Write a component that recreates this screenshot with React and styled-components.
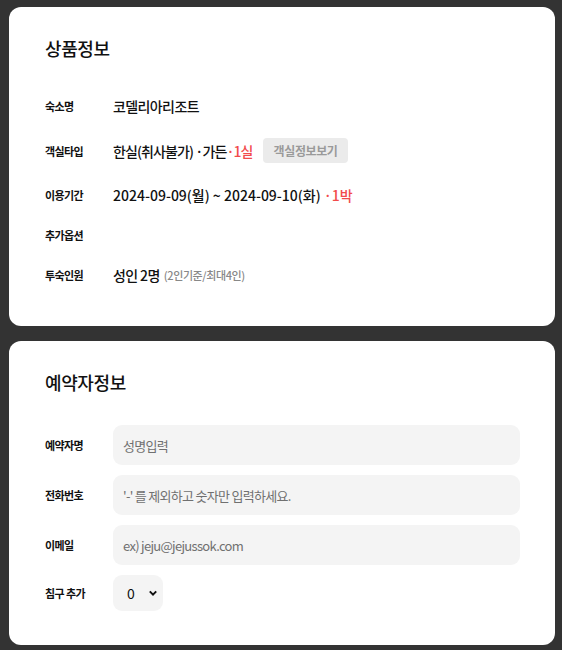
import React from "react";
import styled, { createGlobalStyle } from "styled-components";

const GlobalStyle = createGlobalStyle`
  html, body {
    margin: 0;
    padding: 0;
    background: #333333;
  }
  body {
    font-family: "Noto Sans CJK KR", "Noto Sans", sans-serif;
    color: #111;
  }
`;

const Page = styled.div`
  display: flex;
  flex-direction: column;
  gap: 15px;
  padding: 7px 7px 0 9px;
`;

const Card = styled.section`
  background: #fff;
  border-radius: 12px;
  padding: 28px 35px ${(p) => p.$bottom || 40}px 36px;
`;

const Title = styled.h2`
  margin: 0;
  font-size: 18px;
  line-height: 26px;
  font-weight: 500;
  letter-spacing: -0.4px;
`;

const InfoList = styled.div`
  display: flex;
  flex-direction: column;
  gap: 21px;
  margin-top: 34px;
`;

const Row = styled.div`
  display: flex;
  align-items: center;
  min-height: ${(p) => p.$h || 22}px;
`;

const Label = styled.div`
  width: 68px;
  flex-shrink: 0;
  font-size: 11px;
  font-weight: 700;
  letter-spacing: -0.6px;
  color: #111;
`;

const Value = styled.div`
  font-size: 14px;
  font-weight: 500;
  letter-spacing: ${(p) => p.$spacing || "-0.6px"};
  color: #111;
  display: flex;
  align-items: center;
  white-space: nowrap;
`;

const Accent = styled.span`
  color: #f24b4b;
  margin-left: ${(p) => p.$gap || 0}px;
`;

const Sub = styled.span`
  font-size: 11px;
  color: #888;
  margin-left: 4px;
  letter-spacing: -0.4px;
`;

const SmallButton = styled.button`
  margin-left: 10px;
  height: 25px;
  padding: 0 11px;
  border: none;
  border-radius: 4px;
  background: #ebebeb;
  color: #9a9a9a;
  font-family: inherit;
  font-size: 12px;
  font-weight: 700;
  letter-spacing: -0.4px;
`;

const FormList = styled.div`
  display: flex;
  flex-direction: column;
  gap: 10px;
  margin-top: 30px;
`;

const Input = styled.input`
  flex: 1;
  height: 40px;
  box-sizing: border-box;
  border: none;
  border-radius: 9px;
  background: #f4f4f4;
  padding: 0 10px;
  font-family: inherit;
  font-size: 13px;
  letter-spacing: -0.7px;
  outline: none;
  &::placeholder {
    color: #707070;
  }
`;

const SelectBox = styled.div`
  position: relative;
  width: 50px;
  height: 36px;
  border-radius: 9px;
  background: #f4f4f4;
  display: flex;
  align-items: center;
  padding-left: 14px;
  box-sizing: border-box;
  font-size: 14px;
  color: #111;
`;

const Chevron = styled.svg`
  position: absolute;
  right: 5px;
  top: 13px;
`;

export default function App() {
  return (
    <>
      <GlobalStyle />
      <Page>
        <Card>
          <Title>상품정보</Title>
          <InfoList>
            <Row>
              <Label>숙소명</Label>
              <Value>코델리아리조트</Value>
            </Row>
            <Row $h={25}>
              <Label>객실타입</Label>
              <Value $spacing="-0.9px">
                한실(취사불가) ·가든<Accent>·1실</Accent>
                <SmallButton>객실정보보기</SmallButton>
              </Value>
            </Row>
            <Row>
              <Label>이용기간</Label>
              <Value $spacing="0">
                2024-09-09(월) ~ 2024-09-10(화)<Accent $gap={3}>·1박</Accent>
              </Value>
            </Row>
            <Row $h={16}>
              <Label>추가옵션</Label>
            </Row>
            <Row>
              <Label>투숙인원</Label>
              <Value>
                성인 2명<Sub>(2인기준/최대4인)</Sub>
              </Value>
            </Row>
          </InfoList>
        </Card>
        <Card $bottom={34}>
          <Title>예약자정보</Title>
          <FormList>
            <Row $h={40}>
              <Label>예약자명</Label>
              <Input placeholder="성명입력" />
            </Row>
            <Row $h={40}>
              <Label>전화번호</Label>
              <Input placeholder="'-' 를 제외하고 숫자만 입력하세요." />
            </Row>
            <Row $h={40}>
              <Label>이메일</Label>
              <Input placeholder="ex) jeju@jejussok.com" />
            </Row>
            <Row $h={36}>
              <Label>침구 추가</Label>
              <SelectBox>
                0
                <Chevron width="10" height="10" viewBox="0 0 10 10">
                  <path d="M1.8 3.4 L5 6.6 L8.2 3.4" fill="none" stroke="#111" strokeWidth="2" />
                </Chevron>
              </SelectBox>
            </Row>
          </FormList>
        </Card>
      </Page>
    </>
  );
}
